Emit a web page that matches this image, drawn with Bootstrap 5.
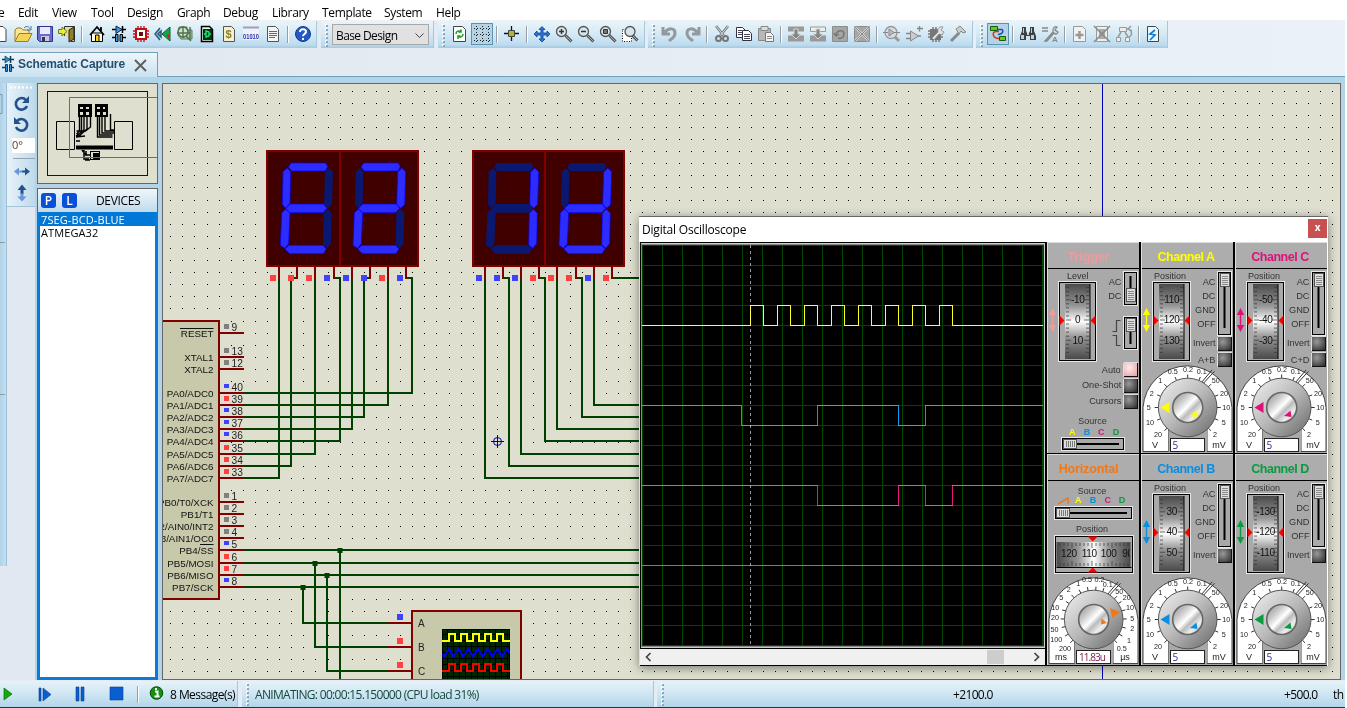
<!DOCTYPE html>
<html lang="en">
<head>
<meta charset="utf-8">
<meta name="viewport" content="width=device-width, initial-scale=1">
<title>Schematic Capture</title>
<link href="https://cdn.jsdelivr.net/npm/bootstrap@5.3.0/dist/css/bootstrap.min.css" rel="stylesheet">
<style>
body{width:1347px;height:708px;overflow:hidden;background:#fff;font:12px/16px "Open Sans","Noto Sans",sans-serif;color:#000}
.app{width:1345px;height:708px;background:#e6ecf4;position:relative;overflow:hidden}
.menubar{height:20px;background:#fff;padding-top:5px;letter-spacing:-.35px}
.menubar span{flex:none;white-space:nowrap}
.tools{height:28px;background:linear-gradient(90deg,#e1e8ef,#eaf1f9);border-top:1px solid #f0f0f0}
.band{height:27px;flex:none;background:linear-gradient(#e9f4fa 0,#d6eaf5 45%,#bddcf0 88%,#a6c9dc 100%);border-right:1px solid #a5c8dc;padding-top:2px}
.grip{width:11px;flex:none;height:24px;margin-top:1px;background:
 radial-gradient(circle at 1px 1px,#8ba7ba 1px,transparent 1.4px) 5px 1px/11px 4px repeat-y,
 radial-gradient(circle at 1px 1px,#fff 1px,transparent 1.4px) 4px 0/11px 4px repeat-y}
.ic{width:22px;height:22px;flex:none;display:block}
.ic.on{background:#b4d3e6;outline:1px solid #5a94b5;outline-offset:-1px}
.sep{width:8px;flex:none;height:17px;margin-top:3px;background:linear-gradient(90deg,#979ea3 1px,#fff 1px) 3px 0/2px 17px no-repeat}
.picker{width:97px;height:21px;margin-top:1px;background:#e1e1e1;border:1px solid #a8a8a8;padding:2px 4px 0 3px;letter-spacing:-.6px}
.tabs{height:29px;background:linear-gradient(90deg,#e1e8ef,#eaf1f9);border-bottom:1px solid #6f9fbb;padding-top:4px}
.tabitem{width:158px;height:25px;background:linear-gradient(#eef5fa,#c9e2f1);border:solid #6f9fbb;border-width:1px 1px 0 0;font:bold 12px/21px "Liberation Sans",sans-serif;color:#24506f;letter-spacing:-.1px}
.tabitem span{margin-top:-2px}
.work{height:603px;background:#b3d4e6;padding-top:6px}
.strip0{width:7px;height:483px;background:linear-gradient(90deg,#b0d2e6,#c4dff0);border-right:1px solid #9bc0d8}
.side{background:#e1e8f1}
.rot{width:28px;height:124px;background:linear-gradient(90deg,#e8f2f9,#bedaeb);border-bottom:1px solid #a5c3d6}
.leftcol{width:121px;margin-left:2px}
.overview{height:101px;border:1px solid #666;background:#dfdfd0}
.devices{height:492px;margin-top:4px;border:1px solid #646464}
.devbox{border:2px solid #0b7ad6;border-top:0;background:#fff;height:467px;font-size:11px;line-height:13px}
.devhead{height:23px;background:linear-gradient(#f0f6fa,#c0dbec)}
.keybox{width:15px;height:15px;border-radius:3px;background:#0a4fd8;color:#fff;font-size:12px;line-height:15px;text-align:center;font-weight:600}
.picked{background:#0078d7;color:#fff;height:14px;line-height:15px;letter-spacing:.1px}
.canvas{width:1179px;height:597px;margin-left:4px;border:1px solid #666;background:#dfdfd0;overflow:hidden}
.status{height:28px;background:#e6ecf4;border-bottom:1px solid #12384a;padding-top:1px}
.sband{height:26px;flex:none;white-space:nowrap;background:linear-gradient(#e6f2f9,#cfe6f3 50%,#b1d5e9)}
.sband span{padding-top:2px}
.osc{left:639px;top:216px;width:689px;height:450px;background:#fff;border-top:1px solid #666;box-shadow:0 2px 9px rgba(0,0,0,.45)}
.osctitle{height:25px;padding-left:3px;letter-spacing:-.2px}
.xbtn{width:19px;height:19px;background:#c75050;color:#fff;font:bold 10px/17px "Open Sans",sans-serif;text-align:center;margin:2px 1px 0 0}
.panels{display:grid;grid-template-columns:94px 94px 92px;grid-template-rows:212px 212px;background:#000;width:281px;padding-left:1px;height:424px}
.pane{width:92px;height:211px;background:#a9a9a9;border-top:1px solid #ddd;border-left:1px solid #ddd}
.pane h6{margin:0;height:26px;border-bottom:1px solid #000;font:bold 12.5px/28px "Liberation Sans",sans-serif;letter-spacing:-.5px;text-align:center;background:#adadad;padding-right:3px}
.pane.first h6{padding-right:10px;letter-spacing:-.15px}
svg text{font-family:"Liberation Sans",sans-serif}
.pane svg{display:block;margin-left:-1px}
</style>
</head>
<body>
<div class="app d-flex flex-column">
 <nav class="menubar d-flex" id="menu"></nav>

 <div class="tools d-flex">
  <div class="band d-flex" style="width:327px;margin-left:-10px">
   <svg class="ic"><path d="M6 3.500h7l3 3v12H6z" fill="#fff" stroke="#444"/></svg>
   <svg class="ic"><path d="M3 18V7l2-2h4l2 2h6v3" fill="#f7e79a" stroke="#a07d1c"/><path d="M3 18.500l4-8h13l-4 8z" fill="#f4d458" stroke="#a07d1c"/><path d="M12 5c3-3 5-1 6 1m1-3v4h-4" fill="none" stroke="#4a76a8"/></svg>
   <svg class="ic"><path d="M3.500 3.500h15v15h-13l-2-2z" fill="#6a6ad0" stroke="#32328c"/><path d="M6 4h10v7H6z" fill="#e8ecfa"/><path d="M7 13h8v5H7z" fill="#c8c8e0"/><path d="M8 14h3v4H8z" fill="#334"/></svg>
   <svg class="ic"><path d="M8.500 13V3.500h10v15H15" fill="#e0dca8" stroke="#333"/><path d="M18 4l-5 3v12l5-3z" fill="#8f7e2a" stroke="#222"/><path d="M2.500 6.500H6V4l5 4.500L6 13v-2.500H2.500z" fill="#e4ee3c" stroke="#6c7a12"/></svg>
   <i class="sep"></i>
   <svg class="ic"><path d="M5.500 10h11v8.500h-11z" fill="#fffce0" stroke="#000"/><path d="M4 12l7-8 7 8M15 4v4" fill="none" stroke="#000" stroke-width="1.800"/><path d="M9.500 12h3.500v6.500H9.500z" fill="#f1d21e" stroke="#000"/></svg>
   <svg class="ic"><path d="M4 6.500h14M4 14.500h4m6 0h4M14.500 3v7" stroke="#000" stroke-width="1.500"/><path d="M8 3v7.500l6-4z" fill="#3e9be0" stroke="#124"/><path d="M7.500 11.500h2.500v7H7.500zM12 11.500h2.500v7H12z" fill="#3e9be0" stroke="#000"/></svg>
   <svg class="ic"><path d="M8 3v16M11 3v16M14 3v16M3 8h16M3 11h16M3 14h16" stroke="#c01010" stroke-width="1.300"/><path d="M6 6h10v10H6z" fill="#fff" stroke="#c01010" stroke-width="2"/><path d="M9 9h4v4H9z" fill="#5a1111"/></svg>
   <svg class="ic"><path d="M8 5l-5 6 5 6M9 8l-3 3 3 3z" fill="#a8c8dc" stroke="#2a5878" stroke-width="1.500"/><path d="M18 4v14l-8-7z" fill="#17a44a" stroke="#063"/><path d="M14 12l4-1v6z" fill="#d02222"/></svg>
   <svg class="ic"><path d="M5 4h8v3h5v9H7l-3-4z" fill="#a8c8a0" stroke="#5a7c5a"/><circle cx="9" cy="9" r="5" fill="#cfe3cf" stroke="#507050" stroke-width="1.500"/><path d="M9 3v12M3 10h13M12 13l5 5M16 4v13" stroke="#507050" stroke-width="1.400"/></svg>
   <svg class="ic"><path d="M5.500 3.500h8l3 3v12h-11z" fill="#e8f8e8" stroke="#000" stroke-width="1.500"/><path d="M7 6h9v11H7z" fill="#031"/><path d="M8 11h2m0-3v6l3-1V9zM13 11h2" fill="none" stroke="#1ee870" stroke-width="1.400"/></svg>
   <svg class="ic"><path d="M5.500 3.500h8l3 3v12h-11z" fill="#f3efcf" stroke="#555"/><text x="7.500" y="15" font-size="11" font-weight="bold" fill="#8a8230">$</text></svg>
   <svg class="ic"><path d="M3 5h16v12H3z" fill="#eef0f8"/><path d="M3 4.500h16" stroke="#9aa0b8" stroke-width="2"/><text x="3" y="16" font-size="7.500" font-weight="bold" fill="#2a34b0" textLength="16" lengthAdjust="spacingAndGlyphs">01010</text></svg>
   <svg class="ic"><path d="M5.500 3.500h8l3 3v12h-11z" fill="#f6f6f6" stroke="#555"/><path d="M7 8.500h8M7 10.500h8M7 12.500h8M7 14.500h6" stroke="#666"/></svg>
   <i class="sep"></i>
   <svg class="ic"><circle cx="11" cy="11" r="7.500" fill="#2458c4" stroke="#123a8c"/><path d="M8 9c0-4 6.500-3.500 6 0-.3 2-3 2-3 4.200M11 15v2" fill="none" stroke="#fff" stroke-width="2"/></svg>
  </div>
  <div class="band d-flex" style="width:113px;margin-left:4px"><i class="grip"></i>
   <div class="picker d-flex justify-content-between align-items-center"><span>Base Design</span><svg width="9" height="6"><path d="M.5.500l4 4 4-4" fill="none" stroke="#444"/></svg></div>
  </div>
  <div class="band d-flex" style="width:207px;margin-left:4px"><i class="grip"></i>
   <svg class="ic"><path d="M4.500 3.500h9l3 3v12h-12z" fill="#fff" stroke="#444"/><path d="M7 11c0-3 3-4 5-2m0-2.500V9H9.500M14 11c0 3-3 4-5 2m0 3v-3h2.500" fill="none" stroke="#1c9c22" stroke-width="1.500"/></svg>
   <svg class="ic on"><path d="M3 5.500h16M3 11.500h16M3 17.500h16M5.500 3v16M11.500 3v16M17.500 3v16" stroke="#222" stroke-dasharray="1 2"/></svg>
   <i class="sep"></i>
   <svg class="ic"><path d="M3 10.500h15M10.500 3v15" stroke="#111" stroke-width="1.300"/><path d="M7.500 7.500h6v6h-6z" fill="#b8b030" stroke="#444" /></svg>
   <i class="sep"></i>
   <svg class="ic"><path d="M11 3.500l3 3h-2v3.500h4v-2l3 3-3 3v-2h-4V16h2l-3 3-3-3h2v-4H6v2l-3-3 3-3v2h4V6.500H8z" fill="#2a78d8" stroke="#0c3f92" stroke-width=".8"/></svg>
   <svg class="ic"><path d="M12.500 12.500l6 6" stroke="#555" stroke-width="3"/><path d="M12.500 12.500l6 6" stroke="#aaa"/><circle cx="8.500" cy="8.500" r="5" fill="#d6e4ec" stroke="#555" stroke-width="1.300"/><path d="M6 8.500h5M8.500 6v5" stroke="#333" stroke-width="1.500"/></svg>
   <svg class="ic"><path d="M12.500 12.500l6 6" stroke="#555" stroke-width="3"/><path d="M12.500 12.500l6 6" stroke="#aaa"/><circle cx="8.500" cy="8.500" r="5" fill="#d6e4ec" stroke="#555" stroke-width="1.300"/><path d="M6 8.500h5" stroke="#333" stroke-width="1.500"/></svg>
   <svg class="ic"><path d="M12.500 12.500l6 6" stroke="#555" stroke-width="3"/><path d="M12.500 12.500l6 6" stroke="#aaa"/><circle cx="8.500" cy="8.500" r="5" fill="#d6e4ec" stroke="#555" stroke-width="1.300"/><path d="M6.500 6.500h4v4h-4z" fill="#777" stroke="#333"/></svg>
   <svg class="ic"><path d="M3.500 6.500h9v12h-9z" fill="#fff" stroke="#111" stroke-dasharray="1 1.500"/><path d="M13.500 12.500l5 5" stroke="#555" stroke-width="3"/><path d="M13.500 12.500l5 5" stroke="#aaa"/><circle cx="11" cy="8.500" r="5" fill="#d6e4ec" stroke="#555" stroke-width="1.300"/></svg>
  </div>
  <div class="band d-flex" style="width:325px;margin-left:3px"><i class="grip"></i>
   <svg class="ic"><path d="M4 4v7h7M5 10c5-6 11-5 11 0s-4 6-6 8" fill="none" stroke="#94999d" stroke-width="3"/></svg>
   <svg class="ic"><path d="M18 4v7h-7M17 10c-5-6-11-5-11 0s4 6 6 8" fill="none" stroke="#94999d" stroke-width="3"/></svg>
   <i class="sep"></i>
   <svg class="ic"><path d="M5 3l8 10M17 3L9 13" stroke="#777" stroke-width="2.600"/><path d="M5 3l8 10M17 3L9 13" stroke="#ddd"/><circle cx="7.500" cy="15.500" r="2.500" fill="none" stroke="#777" stroke-width="2"/><circle cx="14.500" cy="15.500" r="2.500" fill="none" stroke="#777" stroke-width="2"/></svg>
   <svg class="ic"><path d="M3.500 4.500h6l3 3v7h-9z" fill="#fff" stroke="#333"/><path d="M9.500 7.500h6l3 3v7h-9z" fill="#fff" stroke="#333"/><path d="M5 7.500h4M5 9.500h4M5 11.500h4M11 11.500h6M11 13.500h6M11 15.500h6" stroke="#446"/></svg>
   <svg class="ic"><path d="M3.500 5.500h12v12h-12z" fill="#b8b8b8" stroke="#888"/><path d="M6 3.500h7v4H6z" fill="#ddd" stroke="#888"/><path d="M10.500 9.500h5l3 3v6h-8z" fill="#f4f4f4" stroke="#777"/><path d="M12 13.500h5M12 15.500h5" stroke="#888"/></svg>
   <i class="sep"></i>
   <svg class="ic"><path d="M3 3.500h16v5H3zM3 12.500h16v6H3z" fill="#999"/><path d="M9 6h4v5h3l-5 5-5-5h3z" fill="#858585" stroke="#d5d5d5"/></svg>
   <svg class="ic"><path d="M3.500 4h15v4.500h-15z" fill="#eee" stroke="#999"/><path d="M3 12.500h16v6H3z" fill="#999"/><path d="M9 6h4v5h3l-5 5-5-5h3z" fill="#858585" stroke="#d5d5d5"/></svg>
   <svg class="ic"><path d="M3.500 3.500h15v15h-15z" fill="#a6a6a6" stroke="#8c8c8c"/><path d="M7 12c1-6 8-5 8-1s-4 5-6 4M5 10l2 3 3-2" fill="none" stroke="#777" stroke-width="1.500"/></svg>
   <svg class="ic"><path d="M3.500 3.500h15v15h-15z" fill="#a6a6a6" stroke="#8c8c8c"/><path d="M4 4l14 14M18 4L4 18" stroke="#d4d4d4" stroke-width="2.200"/><path d="M4 4l14 14M18 4L4 18" stroke="#888"/></svg>
   <i class="sep"></i>
   <svg class="ic"><path d="M13 13l5 5" stroke="#999" stroke-width="3"/><circle cx="10" cy="9.500" r="6" fill="#d5dde2" stroke="#999" stroke-width="1.300"/><path d="M2 9.500h5m6 0h6M8 6v7l5-3.500z" fill="#bbb" stroke="#888"/></svg>
   <svg class="ic"><path d="M3 10.500h4M3 15.500h4M13 13h5M14 5.500h6M16.500 3v5.500" stroke="#888" stroke-width="1.400"/><path d="M7.500 8v10l8-5z" fill="#ccc" stroke="#888"/></svg>
   <svg class="ic"><path d="M5 6h11v11H5z" fill="#777"/><path d="M3 8h2M3 11h2M3 14h2M8 17v2M11 17v2M14 17v2M16 11h2M16 14h2M8 4v2M11 4v2" stroke="#777" stroke-width="1.500"/><path d="M7 15l6-6c-1-4 2-6 5-5l-2 3 3 2c-1 3-3 3-5 2l-5 6z" fill="#e2e2e2" stroke="#888" stroke-width=".8"/></svg>
   <svg class="ic"><path d="M4 18l8-8" stroke="#888" stroke-width="3"/><path d="M9 6l4-3 6 6-3 1-2-2-2 3z" fill="#ccc" stroke="#888"/></svg>
  </div>
  <div class="band d-flex" style="width:192px;margin-left:3px"><i class="grip"></i>
   <svg class="ic on"><path d="M10 6.500h5c2 2 0 5-4 5" fill="none" stroke="#1b50b4" stroke-width="1.500"/><path d="M12 8.500H9c-4 0-4 6 2 7h3" fill="none" stroke="#d43a12" stroke-width="1.500"/><path d="M3.500 3.500h7v4h-7zM12.500 13.500h6v4h-6z" fill="#5fcc22" stroke="#175c0b"/></svg>
   <i class="sep"></i>
   <svg class="ic"><path d="M5 4h4v4l1 2h2l1-2V4h4v4l2 5v4h-6v-4h-4v4H3v-4l2-5z" fill="#3a4044"/><path d="M4 12h3v4H4zM14 12h3v4h-3zM10 10h2v2h-2zM6 5h1v5H6zM14 5h1v5h-1z" fill="#c6ced4"/></svg>
   <svg class="ic"><path d="M3 5h6M3 8h6M6 18l8-9c-1-4 2-6 4-5l-2 3 3 2c-1 3-3 2-4 1l-7 8z" fill="#ddd" stroke="#888" stroke-width="1.300"/><text x="13" y="19" font-size="8" font-weight="bold" fill="#888">A</text></svg>
   <i class="sep"></i>
   <svg class="ic"><path d="M4.500 3.500h9l3 3v12h-12z" fill="#f2f2f2" stroke="#999"/><path d="M10.500 8v8M6.500 12h8" stroke="#999" stroke-width="2.500"/></svg>
   <svg class="ic"><path d="M5.500 3.500h11v15h-11z" fill="#eee" stroke="#999"/><path d="M8 6h6v10H8z" fill="#aaa"/><path d="M3 3l16 16M19 3L3 19" stroke="#888" stroke-width="1.500"/></svg>
   <svg class="ic"><path d="M6.500 4.500h7v4h-7zM3.500 14.500h4v4h-4zM12.500 14.500h4v4h-4z" fill="#eee" stroke="#999"/><path d="M8 9l-3 5M12 9l3 5M14 6c5 0 6 6 2 8M18 3l-3 3 4 2" fill="none" stroke="#999" stroke-width="1.500"/></svg>
   <i class="sep"></i>
   <svg class="ic"><path d="M4.500 3.500h8l3 3v12h-11z" fill="#eef6fb" stroke="#444"/><path d="M12 7l-5 4 5 1-5 5" fill="none" stroke="#0a7ddb" stroke-width="1.700"/></svg>
  </div>
 </div>

 <div class="tabs"><div class="tabitem d-flex align-items-center">
  <svg width="18" height="18" style="margin-top:-2px"><path d="M2 4.500h12M2 12.500h4m5 0h3M10.500 1v7" stroke="#123a58" stroke-width="1.500"/><path d="M5 1v7l5-3.500z" fill="#2a8fd8" stroke="#123a58" stroke-width=".7"/><path d="M5.500 9.500h2v7h-2zM9.500 9.500h2v7h-2z" fill="#2a8fd8" stroke="#123a58"/></svg>
  <span>Schematic Capture</span>
  <svg width="13" height="13" style="margin-left:9px"><path d="M1 1l11 11M12 1L1 12" stroke="#5c6063" stroke-width="2"/></svg>
 </div></div>

 <div class="work d-flex">
  <div class="side"><div class="strip0"><svg width="6" height="483" class="d-block"><path d="M0 11.500h2v19H0" fill="none" stroke="#6f9fbb"/><path d="M0 159.500h5M0 311.500h5" stroke="#8d9aa3"/></svg></div></div>
  <div class="side"><div class="rot">
   <svg width="28" height="123" class="d-block">
    <path d="M3 4.500h24" stroke="#fff" stroke-width="2" stroke-dasharray="2 2"/>
    <g fill="none" stroke="#24508c" stroke-width="2.600"><path d="M19 17a5.800 5.800 0 1 0 1 6"/><path d="M10 38a5.800 5.800 0 1 1-1 6"/></g>
    <path d="M22 13v7h-7zM7 34v7h7z" fill="#24508c"/>
    <rect x="5" y="55" width="23" height="15" fill="#fff"/><text x="5" y="66" font-size="11" fill="#5a3a30" style="font-family:'Open Sans'">0°</text>
    <path d="M6 75.500h22" stroke="#94a3ad"/>
    <path d="M7 88.500l5-4v3h3v2h-3v3z" fill="#6d94d8"/><path d="M23 88.500l-5-4v3h-3v2h3v3z" fill="#24508c"/>
    <path d="M15 101.500l4.500 5.500h-3v4h-3v-4h-3z" fill="#24508c"/><path d="M15 118.500l4.500-5h-3v-3h-3v3h-3z" fill="#6d94d8"/>
   </svg></div></div>
  <div class="leftcol">
   <div class="overview"><svg width="119" height="99" class="d-block" fill="none">
    <rect x="9.500" y="7.500" width="100" height="84" stroke="#0000b4"/>
    <path d="M18.500 37.500h18v28h-18zM76.500 37.500h18v28h-18z" stroke="#000"/>
    <path d="M40 20h14v13H40zM57 20h13v13H57z" fill="#000"/><path d="M42 23h3v2h-3zm6 0h3v2h-3zm-6 5h3v3h-3zm6 0h3v3h-3zm11-5h3v2h-3zm6 0h2v2h-2zm-6 5h3v3h-3zm6 0h3v3h-3z" fill="#dfdfd0"/>
    <path d="M41.500 33v14l-3 3M43.500 33v15l-5 4M46 33v13l-8 6M49 33v12l-8 7h-3M52.500 33v10l-5 4h-9M59.500 33v20h15M61.500 33v18h13M64 33v16h12M67 33v14h9M72.500 30v16h4M38 53l9-1M38 57h4" stroke="#000" stroke-width="1.400"/>
    <path d="M38 63.500h37" stroke="#000" stroke-width="4"/><path d="M46 66v9h5M44 66l4 5h4M48 67v5M47 76h5" stroke="#000" stroke-width="1.500"/><rect x="52.500" y="67.500" width="9" height="8" stroke="#000"/><path d="M55 69h7v7h-7z" fill="#000"/>
    <path d="M120 13.500H31.500v60H120" stroke="#00b414"/>
   </svg></div>
   <div class="devices"><div class="devhead d-flex align-items-center"><span class="keybox" style="margin-left:3px">P</span><span class="keybox" style="margin-left:6px">L</span><span style="margin-left:19px;padding-top:1px;letter-spacing:-.35px">DEVICES</span></div>
    <div class="devbox"><div class="picked ps-0"><span style="margin-left:1px">7SEG-BCD-BLUE</span></div><div style="margin-left:1px;letter-spacing:.1px">ATMEGA32</div></div></div>
  </div>
  <div class="canvas"><svg id="sch" width="1177" height="595" viewBox="163 84 1177 595" class="d-block"></svg></div>
 </div>

 <div class="status d-flex">
  <div class="sband d-flex align-items-center" style="width:238px;border-right:1px solid #a5c8dc;letter-spacing:-.55px">
   <svg width="166" height="26" class="flex-shrink-0"><path d="M4 7v12l8-6z" fill="#12a812" stroke="#087008" stroke-width=".7"/><g fill="#0a5fd0" stroke="#063f90" stroke-width=".6"><path d="M39 7h2v13h-2zM43 7v13l8-6.500zM76 6h3v14h-3zM81 6h3v14h-3zM110 6h13v13h-13z"/></g><path d="M137.500 5v17" stroke="#979ea3"/><path d="M138.500 5v17" stroke="#fff"/><circle cx="156.500" cy="12" r="6.300" fill="#159015" stroke="#064e06"/><path d="M155 10.500h2.500v5M154.500 15.500h5M156 7v2" stroke="#fff" stroke-width="2" fill="none"/></svg>
   <span style="margin-left:4px">8 Message(s)</span></div>
  <div class="sband d-flex align-items-center" style="width:412px;margin-left:4px;border-right:1px solid #a5c8dc;color:#14483c;letter-spacing:-.69px"><i class="grip"></i><span style="margin-left:2px">ANIMATING: 00:00:15.150000 (CPU load 31%)</span></div>
  <div class="sband d-flex align-items-center" style="width:688px;margin-left:3px;letter-spacing:-.65px"><i class="grip"></i><span style="margin-left:285px;width:331px">+2100.0</span><span style="width:49px">+500.0</span><span>th</span></div>
 </div>

 <section class="osc position-absolute">
  <div class="osctitle d-flex justify-content-between"><span style="padding-top:5px">Digital Oscilloscope</span><span class="xbtn">x</span></div>
  <div class="d-flex">
   <div style="width:407px"><svg id="scope" width="407" height="424" viewBox="639 242 407 424" class="d-block" shape-rendering="crispEdges"></svg></div>
   <div class="panels" id="panels"></div>
  </div>
 </section>
</div>

<script src="https://cdn.jsdelivr.net/npm/bootstrap@5.3.0/dist/js/bootstrap.bundle.min.js"></script>
<script>
const $=id=>document.getElementById(id);
const T=(x,y,s,size,fill='#222',anchor='start',extra='')=>`<text x="${x}" y="${y}" font-size="${size}" fill="${fill}" text-anchor="${anchor}" ${extra}>${s}</text>`;
const R=(x,y,w,h,f,s='none')=>`<rect x="${x}" y="${y}" width="${w}" height="${h}" fill="${f}" stroke="${s}"/>`;

// menu entries with the width each occupies
$('menu').innerHTML=[['e',18],['Edit',34],['View',39],['Tool',36],['Design',50],['Graph',46],['Debug',49],['Library',50],['Template',62],['System',52],['Help',40]]
 .map(([t,w],i)=>`<span style="width:${w}px${i?'':';text-indent:-2px'}">${t}</span>`).join('');

// ---------- schematic ----------
const RED='#ff4040',BLU='#4040ff',GRY='#808080';
let s='';
{let d='';for(let i=0;i<97;i++)for(let j=0;j<49;j++)d+=`M${Math.floor(170.7+12.103*i)} ${Math.floor(91.1+12.1*j)}h1v1h-1z`;
 s+=`<path d="${d}" fill="#000" shape-rendering="crispEdges"/>`;}
s+='<path d="M1102.500 84v595" stroke="#0000b4"/>';
let wires='',pins='',sq='';
const dy=[478,466,454,441,429,417,405,393];
[[279,279],[297,291],[315,315],[334,340],[352,352],[370,364],[388,388],[406,412]].forEach(([p,w],i)=>{pins+=`M${p} 267V279`;wires+=`M${p} 278H${w}V${dy[i]}H243`;});
[[485,485],[503,509],[521,521],[539,545],[557,557],[576,582],[594,594]].forEach(([p,w],i)=>{pins+=`M${p} 267V279`;wires+=`M${p} 278H${w}V${dy[i]}H645`;});
pins+='M612 267V279';wires+='M612 278H645';
[550,563,575,587].forEach(y=>wires+=`M243 ${y}H645`);
wires+='M303 587V623H388M315 563V647H388M327 575V671H388M340 550V680';
pins+='M388 623H412M388 647H412M388 671H412';
[[270,RED],[288,RED],[306,RED],[324,BLU],[343,BLU],[361,BLU],[379,RED],[397,BLU],[476,BLU],[494,BLU],[512,BLU],[530,RED],[548,RED],[566,RED],[585,BLU],[603,RED]].forEach(([x,c])=>sq+=R(x,275,6,6,c));
[[614,BLU],[638,RED],[662,RED]].forEach(([y,c])=>sq+=R(397,y,6,6,c));
let lab='';
[[333,9,'RESET',GRY],[357,13,'XTAL1',GRY],[369,12,'XTAL2',GRY],[393,40,'PA0/ADC0',BLU],[405,39,'PA1/ADC1',RED],[417,38,'PA2/ADC2',BLU],[429,37,'PA3/ADC3',BLU],[441,36,'PA4/ADC4',BLU],[454,35,'PA5/ADC5',RED],[466,34,'PA6/ADC6',RED],[478,33,'PA7/ADC7',RED],[502,1,'PB0/T0/XCK',GRY],[514,2,'PB1/T1',GRY],[526,3,'PB2/AIN0/INT2',GRY],[538,4,'PB3/AIN1/OC0',GRY],[550,5,'PB4/SS',BLU],[563,6,'PB5/MOSI',RED],[575,7,'PB6/MISO',RED],[587,8,'PB7/SCK',BLU]]
 .forEach(([y,n,t,c])=>{pins+=`M220 ${y}H243.500`;sq+=R(224,y-9,5,c==BLU?4:5,c);lab+=T(213.500,y+4,t,9.800,'#111','end')+T(231.500,y-2,n,10.200,'#222');});
s+=`<path d="${wires}" fill="none" stroke="#004000" stroke-width="2" shape-rendering="crispEdges"/>`;
s+=[[340,550],[315,563],[327,575],[303,587]].map(([x,y])=>R(x-2.500,y-2,5,5,'#004000')).join('');
s+=`<rect x="100" y="321" width="119" height="278" fill="#c8c8aa" stroke="#800000" stroke-width="2"/>`;
s+=`<path d="${pins}" fill="none" stroke="#800000" stroke-width="2" shape-rendering="crispEdges"/>`+sq+lab+'<path d="M180 328.500h33.500M200 544.500h13.500" stroke="#111"/>';
// seven segment outlines, in thirds of a pixel
const seg={a:'100,81 108,69 212,69 218,80 211,93 110,93',b:'222,84 234,95 231,193 219,205 207,193 210,97',f:'97,84 107,95 105,190 92,205 82,193 84,95',g:'92,205 106,192 206,192 216,205 204,218 104,218',e:'92,207 105,219 101,311 90,325 76,316 80,219',c:'218,207 230,220 228,311 216,325 204,314 206,220',d:'90,327 102,316 204,316 214,327 205,341 104,341'};
[[267,340],[473,545]].forEach(([x,m])=>s+=`<rect x="${x}" y="151" width="151" height="115" fill="#400000" stroke="#800000" stroke-width="2"/><path d="M${m} 151v115" stroke="#800000" stroke-width="2"/>`);
[[0,'afged'],[218,'abged'],[617,'bc'],[836,'bgecd']].forEach(([o,on])=>{
 for(const pass of [0,1]) for(const k in seg){const lit=on.includes(k);if(lit!=!!pass)continue;
  s+=`<polygon transform="translate(255 140) scale(.33333) translate(${o} 0)" points="${seg[k]}" fill="${lit?'#2c2cff':'#0a1870'}" ${lit?'stroke="#0000ff" stroke-width="2"':''}/>`;}});
s+='<rect x="412" y="611" width="109" height="90" fill="#c8c8aa" stroke="#800000" stroke-width="2"/>'+R(442,629,68,60,'#002800');
{let g='';for(let x=447;x<510;x+=6)g+=`M${x}.500 629v60`;for(let y=634;y<680;y+=6)g+=`M442 ${y}.500h68`;s+=`<path d="${g}M442.500 680V629.500H509.500V680" stroke="#000" fill="none"/>`;
 const sqw=(lo,hi,c)=>{let p=`M442 ${lo}H449`;for(let i=0;i<5;i++){const x=449+12*i;p+=`V${hi}H${x+6}V${lo}H${x+12>500?510:x+12}`;}return `<path d="${p}" fill="none" stroke="${c}" stroke-width="2"/>`;};
 let z='M442 655l3 1';for(let i=0;i<7;i++)z+=`L${449+9.700*i} 649`+(i<6?`L${453.500+9.700*i} 656.500`:'l2 4');
 s+=sqw(641,634,'#ff0')+`<path d="${z}" fill="none" stroke="#00f" stroke-width="2"/>`+sqw(671,664,'#f00');}
s+=T(418,627,'A',10)+T(418,651,'B',10)+T(418,675,'C',10);
s+='<g fill="none" stroke="#0000a0"><circle cx="497.500" cy="441.500" r="4"/><path d="M491 441.500h13M497.500 435v13"/></g>';
$('sch').innerHTML=s;

// ---------- oscilloscope screen ----------
s=R(639,242,407,424,'#ddd')+R(640,242,405,407,'#000')+R(641,243,404,405,'#ccc')+R(641,244,403,402.500,'#888')+R(642,245,402,401,'#000');
{let g='';for(let x=642;x<1044;x+=20)g+=`M${x}.500 245v401`;for(let y=245;y<647;y+=20)g+=`M642 ${y}.500h401`;
 g+='M1043.500 245V646';s+=`<path d="${g}" stroke="#004800"/>`;}
s+='<path d="M750.500 245v401" stroke="#999" stroke-dasharray="3 3"/>';
const line=(p,c)=>`<path d="${p}" fill="none" stroke="${c}" style="mix-blend-mode:screen"/>`;
{let p='M642 325.500H750.500';const fall=[763,790,817,844,871,898,925,952],rise=[777,804,831,858,885,912,939];
 fall.forEach((x,i)=>p+=`V305.500H${x}.500V325.500H${i<7?rise[i]+.5:1043}`);
 s+=line(p,'#ffff20');}
s+=line('M642 405.500H741.500V425.500H817.500V405.500H898.500V425.500H925.500V405.500H1043','#109ae6');
s+=line('M642 485.500H817.500V505.500H898.500V485.500H925.500V505.500H952.500V485.500H1043','#e6187f');
s+=line('M642 565.500H1043','#00b33c');
s+=R(640,648,405,1,'#000')+R(640,649,405,16,'#f0f0f0')+R(640,665,407,1,'#000')+R(987,650,17,14,'#cdcdcd')+R(1045,242,1.500,424,'#000');
s+='<path d="M650.500 653l-4 4 4 4M1034.500 653l4 4-4 4" fill="none" stroke="#444" stroke-width="1.700" shape-rendering="auto"/>';
$('scope').innerHTML=s;

// ---------- control panels ----------
const INK='#333';
const defs=`<defs><linearGradient id="wv" x2="0" y2="1"><stop offset="0" stop-color="#4a4a4a"/><stop offset=".3" stop-color="#999"/><stop offset=".5" stop-color="#fff"/><stop offset=".7" stop-color="#999"/><stop offset="1" stop-color="#4a4a4a"/></linearGradient>
<linearGradient id="wh"><stop offset="0" stop-color="#4a4a4a"/><stop offset=".3" stop-color="#999"/><stop offset=".5" stop-color="#fff"/><stop offset=".7" stop-color="#999"/><stop offset="1" stop-color="#4a4a4a"/></linearGradient>
<linearGradient id="kn" x2="1" y2="1"><stop offset="0" stop-color="#f2f2f2"/><stop offset=".5" stop-color="#b8b8b8"/><stop offset="1" stop-color="#666"/></linearGradient>
<linearGradient id="ki" x2="1" y2="1"><stop offset="0" stop-color="#888"/><stop offset=".3" stop-color="#ccc"/><stop offset=".48" stop-color="#fff"/><stop offset=".6" stop-color="#bbb"/><stop offset=".75" stop-color="#eee"/><stop offset="1" stop-color="#aaa"/></linearGradient>
<radialGradient id="bd" cx=".38" cy=".38" r=".8"><stop offset="0" stop-color="#9a9a9a"/><stop offset="1" stop-color="#2c2c2c"/></radialGradient>
<radialGradient id="bp" cx=".4" cy=".35" r=".8"><stop offset="0" stop-color="#ffeaea"/><stop offset="1" stop-color="#e8a0a4"/></radialGradient></defs>`;
const frame=(x,y,w,h,f='#a9a9a9')=>R(x+.5,y+.5,w-1,h-1,'#e8e8e8','#e8e8e8')+R(x+1.500,y+1.500,w-3,h-3,f,'#000');
const btn=(y,f='bd')=>R(76.500,y+.5,14,14,`url(#${f})`,'#111')+`<path d="M76.500 ${y+15}V${y+.5}H91" fill="none" stroke="#ddd"/>`;
const vslide=(y,h,hy,t0,t1)=>frame(76,y,15,h)+R(82.500,t0,2,t1-t0,'#000')+R(79.500,hy+.5,9,13,'#dedede','#555')+`<path d="M81 ${hy+3.500}h6M81 ${hy+5.500}h6M81 ${hy+7.500}h6M81 ${hy+9.500}h6M81 ${hy+11.500}h6" stroke="#888"/>`;
const hslide=(x,y,w)=>frame(x,y,w,14)+R(x+15,y+6,w-21,2,'#000')+R(x+2.500,y+2.500,13,9,'#dedede','#555')+`<path d="M${x+5.500} ${y+4}v6M${x+7.500} ${y+4}v6M${x+9.500} ${y+4}v6M${x+11.500} ${y+4}v6M${x+13.500} ${y+4}v6" stroke="#777"/>`;
const wheel=(nums,col)=>{let g='';for(let i=-8;i<=8;i++){const y=51+i*4.05,l=i%5==0?5:3;g+=`M19 ${y}h${l}M42 ${y}h-${l}`;}
 return frame(11,12,39,81)+R(18,15,25,75,'url(#wv)')+R(42.500,15,1,75,'#000')+`<path d="${g}" stroke="#333" stroke-width=".7"/>`
 +nums.map((n,i)=>T(30.700,34+20.300*i,n,10,'#111','middle','letter-spacing="-.3"')).join('')
 +'<path d="M12.500 46.500v10l5-5zM48.500 46.500v10l-5-5z" fill="#f00"/>'
 +`<path d="M5.500 39l3.700 7H6.200v10h3l-3.700 7-3.700-7h3V46h-3z" fill="${col}"/>`;};
const P=(cx,cy,r,a)=>[(cx+r*Math.cos(a*Math.PI/180)).toFixed(1),(cy-r*Math.sin(a*Math.PI/180)).toFixed(1)];
const dial=(labels,angles,u1,u2,val,col,ptr)=>{const cx=46.700,cy=138.500;let t='';
 angles.forEach(a=>t+=`M${P(cx,cy,29,a)}L${P(cx,cy,33,a)}`);
 return `<path d="M2 182.500V138.500a44.600 44.600 0 0 1 89 0V182.500H66V138H27.500V182.500z" fill="#fff" stroke="#444"/>`
 +`<path d="M${P(cx,cy,29,61)}L${P(cx,cy,45,57)}M${P(cx,cy,29,57)}L${P(cx,cy,45,53.500)}" stroke="#333"/>`
 +`<path d="M27.500 182V158H66V182z" fill="#a9a9a9"/><path d="${t}" stroke="#333"/>`
 +`<circle cx="${cx}" cy="${cy}" r="29.300" fill="url(#kn)" stroke="#555"/><circle cx="${cx}" cy="${cy}" r="15" fill="url(#ki)" stroke="#666" stroke-width="1.600"/>`
 +labels.map(([n,x,y])=>T(x,y+2.600,n,7.200,'#222','middle')).join('')
 +T(14,178.500,u1,9,'#222','middle')+T(78,178.500,u2,9,'#222','middle')
 +R(29.500,169.500,34,13,'#fff','#222')+T(val.length>1?32:31.500,179.500,val,10,val.length>1?'#7a2050':'#2a2a90','start',`style="font-family:'Open Sans'" ${val.length>1?'textLength="27"':''}`)+ptr;};
const chLab=[['5',7.700,138.700],['2',10.700,124.300],['1',19.300,111.700],['0.5',31.700,102.700],['0.2',47,100],['0.1',60.700,102.700],['50',74.700,111.700],['20',83,124.300],['10',85.200,138.700],['5',82.700,153.300],['2',74,165.300],['10',9,153.300],['20',17,165.300]];
const chAng=[225,202.500,180,157.500,135,112.500,90,67.500,45,22.500,0,-22.500,-45];
const pane=(name,col,b,first='')=>`<div class="pane ${first}"><h6 style="color:${col}">${name}</h6><svg width="92" height="184">${b}</svg></div>`;
const channel=(name,col,nums,sum)=>{let b=T(13,10,'Position',9,INK)+wheel(nums,col);
 [['AC',15.500],['DC',29.500],['GND',43.500],['OFF',57.500]].forEach(([t,y])=>b+=T(74.500,y,t,9.200,INK,'end'));
 b+=vslide(2,65,4,17,59)+T(74.500,77,'Invert',9,INK,'end')+btn(67);
 if(sum)b+=T(74.500,94,sum,9.200,INK,'end')+btn(83);
 b+=dial(chLab,chAng,'V','mV','5',col,`<path d="M19.500 138.500l9-5.500v11z" fill="${col}"/><path d="M56.500 148l-1-6.500-6.500 5.500z" fill="${col}"/>`);
 return pane(name,col,b);};
const abcd=(xs,y)=>['A','B','C','D'].map((c,i)=>T(xs[i],y,c,9,['#ff0','#0a8fe0','#e0107a','#0a9a40'][i],'middle','font-weight="bold"')).join('');
const trig=defs+T(20,10,'Level',9,INK)+wheel(['-10','0','10'],'#f09a9e')+T(74.500,15.700,'AC',9.200,INK,'end')+T(74.500,29.700,'DC',9.200,INK,'end')
 +vslide(2,35,19,7,20)+vslide(47,34,49,62,75)+'<path d="M65.500 62.500h4v-11h4M65.500 66.500h4v10h4" fill="none" stroke="#444" stroke-width="1.200"/>'
 +T(73.700,103.700,'Auto',9.200,INK,'end')+T(74.300,118.700,'One-Shot',9.200,INK,'end')+T(74.300,134.700,'Cursors',9.200,INK,'end')+btn(93,'bp')+btn(109)+btn(125)
 +T(31.300,155,'Source',9,INK)+abcd([25.300,40,54.300,69],166)+hslide(14,168,64);
let ht='';for(let i=-8;i<=9;i++){const x=45+i*4;ht+=`M${x} 62v${i%5==0?5:3}M${x} 85v-${i%5==0?5:3}`;}
const hor=T(30.700,13,'Source',9,INK)+'<path d="M11 23l10-6v6" fill="none" stroke="#f07818" stroke-width="1.500"/>'+abcd([31.300,46,60.700,75],22)+hslide(7,25,79)
 +T(29,51,'Position',9,INK)+frame(7,54,80,39)+R(9.500,61,74,25,'url(#wh)')+`<path d="${ht}" stroke="#333" stroke-width=".7"/>`
 +'<svg x="9" y="61" width="74" height="25">'+[['120',13],['110',33.300],['100',52.700],['90',71.500]].map(([t,x])=>T(x,14.500,t,10,'#111','middle','letter-spacing="-.3"')).join('')+'</svg>'
 +'<path d="M9.500 86.500h75" stroke="#000"/><path d="M40.700 55.500h10l-5 5zM40.700 91.500h10l-5-5z" fill="#f00"/>'
 +dial([['0.5',40,98],['0.2',52.500,98.300],['1',31.300,102.300],['2',21.700,108],['5',14.300,116.300],['10',8.300,126.300],['20',8,136.300],['50',7.500,148.300],['100',9.300,158.300],['200',18,167.700],['0.1',60.700,103.700],['50',72.300,110.300],['20',79.700,116.300],['10',83,126.300],['5',85.300,137.300],['2',85.300,147.700],['1',82,159.300],['0.5',74.700,167.700]],
  [225,210,194,179,163,147,132,116,101,86,72,45,33,17,1,-15,-30,-45],'ms','µs','11.83u','#f07818','<path d="M73 131l-10-4 2.500 10z" fill="#f07818"/><path d="M60 142l-5.500-4.500-.5 6z" fill="#f07818"/>');
$('panels').innerHTML=pane('Trigger','#f09a9e',trig,'first')+channel('Channel A','#ffff00',['110','120','130'],'A+B')+channel('Channel C','#e0107a',['-50','-40','-30'],'C+D')
 +pane('Horizontal','#f07818',hor,'first')+channel('Channel B','#0a8fe0',['30','40','50'])+channel('Channel D','#0a9a40',['-130','-120','-110']);
</script>
</body>
</html>
